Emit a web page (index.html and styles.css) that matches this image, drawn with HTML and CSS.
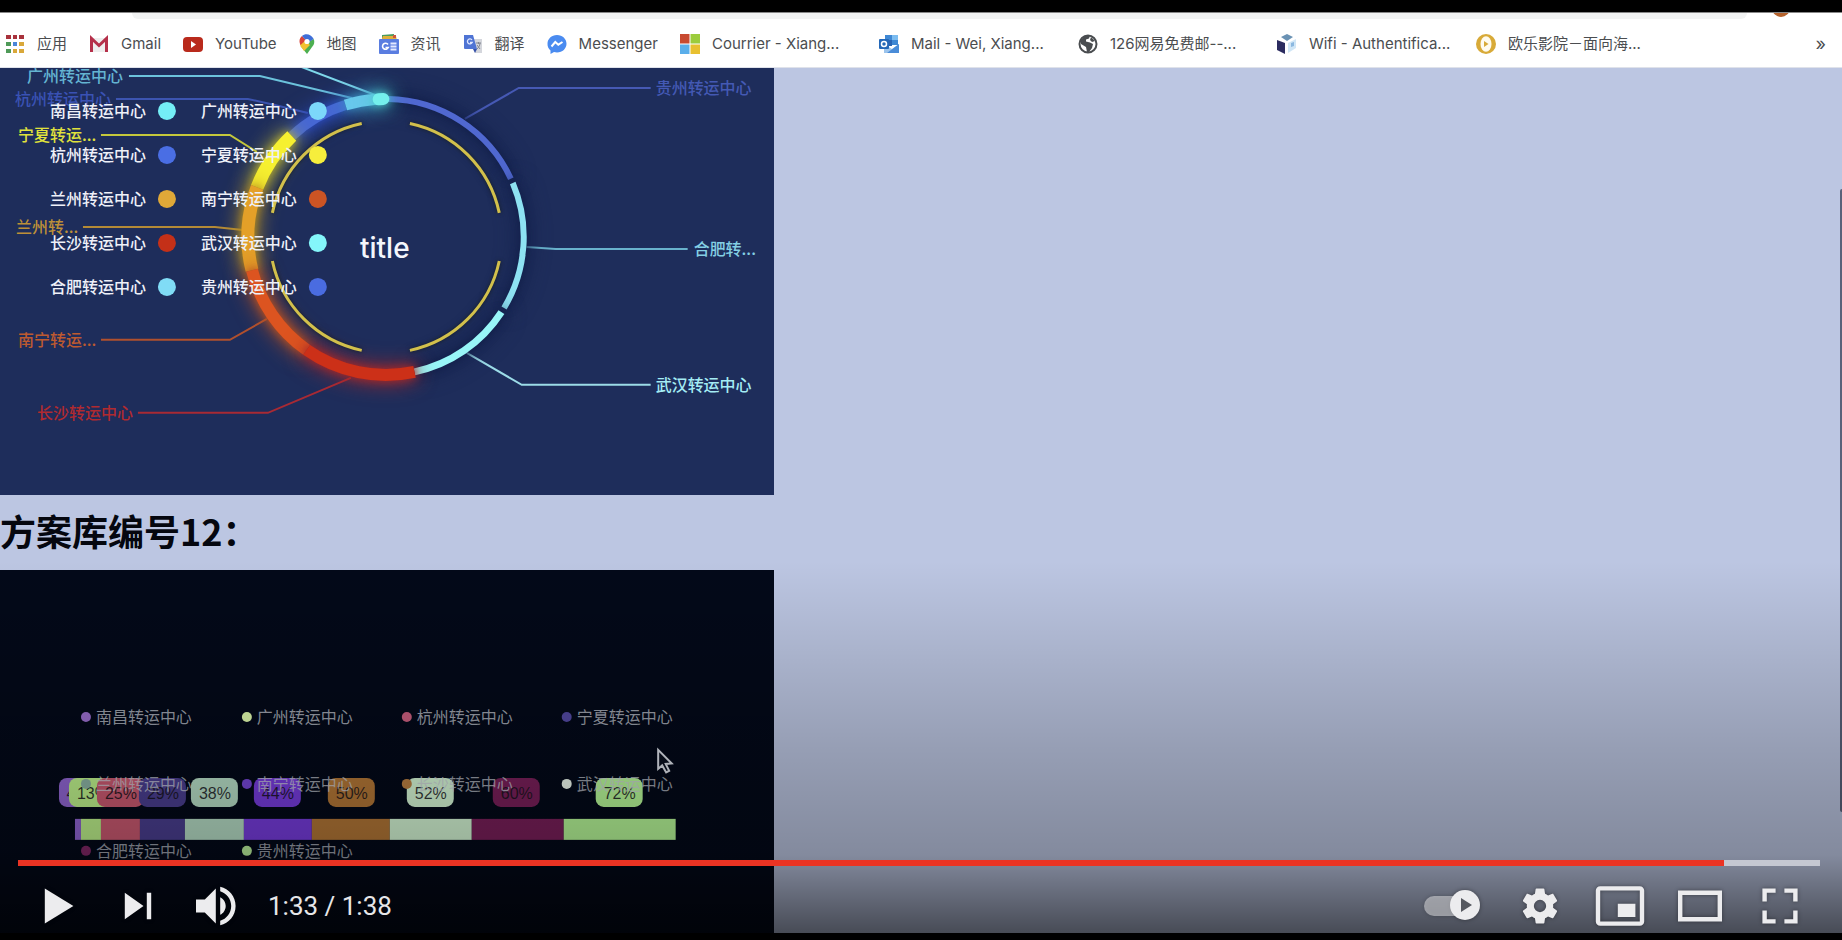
FILE: index.html
```html
<!DOCTYPE html>
<html lang="zh">
<head>
<meta charset="utf-8">
<title>方案库</title>
<link rel="stylesheet" href="styles.css">
</head>
<body>
<main class="player">
  <div class="browser">
    <div class="toolbar"><span class="address"></span><span class="avatar"></span></div>
    <nav class="bookmarks" aria-label="书签">
      <a class="bm" href="#"><svg viewBox="0 0 20 20"><g fill="#a8323c"><path d="M1 1h5v4H1zM8 1h4v4H8zM14 1h5v4h-5z"/></g><path fill="#4f9a58" d="M1 8h5v4H1zM1 15h5v4H1z"/><path fill="#4a86d8" d="M8 8h4v4H8z"/><path fill="#d9a83a" d="M14 8h5v4h-5zM8 15h4v4H8zM14 15h5v4h-5z"/></svg><span>应用</span></a>
      <a class="bm" href="#"><svg viewBox="0 0 20 20"><path fill="#eee" d="M3 4h14v14H3z"/><path d="M2.500 18V4.500L10 11.500l7.500-7V18" fill="none" stroke="#b5304a" stroke-width="3"/></svg><span>Gmail</span></a>
      <a class="bm" href="#"><svg viewBox="0 0 20 20"><rect y="3" width="20" height="15" rx="4" fill="#b92a1c"/><path d="M8 7l5 3.500L8 14z" fill="#fff"/></svg><span>YouTube</span></a>
      <a class="bm pin" href="#"><svg viewBox="0 0 16 20"><path fill="#4caf50" d="M1.500 12L8 20l6.500-9c1-2 1-4 .2-6z"/><path fill="#f2c230" d="M1 10l4-4 6 5-6 6-3.500-5z"/><path fill="#d9453a" d="M.5 7C.5 5 1.500 3 3 2l4 4-5.500 5C.8 9.500.5 8.500.5 7z"/><path fill="#3f6fd8" d="M3 2c3-3 9-2.500 11.700 3L10 8 6.500 6z"/><circle cx="8" cy="7.500" r="2.600" fill="#fff"/></svg><span>地图</span></a>
      <a class="bm" href="#"><svg viewBox="0 0 20 20"><path fill="#4a9b5c" d="M3 1l12-1v5H3z"/><path fill="#e0b03a" d="M4 2h13l1 5H2z"/><path fill="#cf5540" d="M14 1h3v3h-3z"/><rect y="5" width="20" height="15" rx="1" fill="#5a7de0"/><path d="M9 10.500a3 3 0 1 0 .3 3H6.500" fill="none" stroke="#fff" stroke-width="1.600"/><path d="M11.500 9.500h6M11.500 12.500h6M11.500 15.500h6" stroke="#e4eaff" stroke-width="1.800"/></svg><span>资讯</span></a>
      <a class="bm" href="#"><svg viewBox="0 0 20 20"><path fill="#d4d6dc" d="M8 5h11v14h-7z"/><path fill="#4f74d4" d="M1 1h9l4 14H2a1 1 0 0 1-1-1z"/><path fill="#3550a8" d="M10 15h4l-2 4z"/><path d="M9 6a2.500 2.500 0 1 0 .2 2.500H7" fill="none" stroke="#dfe7ff" stroke-width="1.300"/><path d="M13 9h5M15.500 8v2M17 9c0 3-2 5-3 6M14 11l3 4" fill="none" stroke="#838791"/></svg><span>翻译</span></a>
      <a class="bm" href="#"><svg viewBox="0 0 20 20"><path fill="#4a8bf0" d="M10 1c5.500 0 9.500 4 9.500 8.700S15.500 18.500 10 18.500c-1 0-2-.1-3-.4L3.500 20v-3.500A8.500 8.500 0 0 1 .5 9.700C.5 5 4.500 1 10 1z"/><path d="M4.500 12.500L8.300 8l3 2.700L15.500 8" fill="none" stroke="#fff" stroke-width="2"/></svg><span>Messenger</span></a>
      <a class="bm wide" href="#"><svg viewBox="0 0 20 20"><path fill="#c84a30" d="M0 0h9.500v9.500H0z"/><path fill="#9ccc3c" d="M10.500 0H20v9.500h-9.500z"/><path fill="#5aaeea" d="M0 10.500h9.500V20H0z"/><path fill="#e8c030" d="M10.500 10.500H20V20h-9.500z"/></svg><span>Courrier - Xiang...</span></a>
      <a class="bm wide" href="#"><svg viewBox="0 0 20 20"><path fill="#3f88d4" d="M6 1h13v10H6z"/><path fill="#7cbcf0" d="M13 1h6v5h-6z"/><path fill="#2a64b4" d="M6 6h7v6H6z"/><path fill="#9cc4ec" d="M5 10l8 5 7-5v9H5z"/><path fill="#4a8cd8" d="M20 10v9H8z"/><rect y="5" width="10" height="10" rx="1" fill="#2468b8"/><circle cx="5" cy="10" r="2.500" fill="none" stroke="#fff" stroke-width="1.500"/></svg><span>Mail - Wei, Xiang...</span></a>
      <a class="bm wide" href="#"><svg viewBox="0 0 20 20"><circle cx="10" cy="10" r="8.500" fill="#fff" stroke="#4a4d50" stroke-width="2"/><path fill="#4a4d50" d="M3 6l4-4 5-.5-1 3-3 1v2l4 1 3 1.500-1 4-3 4H9l-1-5-5-3zM13 3l4 4-3 1-2-2z"/></svg><span>126网易免费邮--...</span></a>
      <a class="bm wide" href="#"><svg viewBox="0 0 20 20"><path fill="#6a92b4" d="M4 3l6-3 6 3-6 4z"/><path fill="#2c2c60" d="M0 6l8 3v11l-8-4z"/><path fill="#d0e6f6" d="M11 9l8-4v9l-8 5z"/><path fill="#8bb8e0" d="M14 9l3-1v4l-3 1z"/></svg><span>Wifi - Authentifica...</span></a>
      <a class="bm wide" href="#"><svg viewBox="0 0 20 20"><circle cx="10" cy="10" r="10" fill="#d8aa38"/><ellipse cx="10" cy="10" rx="5.500" ry="7.800" fill="#fffbee"/><path fill="#d8aa38" d="M8 7l4.500 3L8 13z"/></svg><span>欧乐影院－面向海...</span></a>
      <button class="more" type="button" aria-label="更多书签">»</button>
    </nav>
  </div>

  <div class="page">
    <section class="card ring">
      <svg viewBox="0 68 774 427" role="img" aria-label="转运中心">
        <g class="leaders">
          <path stroke="#7ed8ea" d="M299 66L378 96"/>
          <path stroke="#6cc3dc" d="M129 76H260L352 98"/>
          <path stroke="#3c54b0" d="M116 99H248L275 105L308 113"/>
          <path stroke="#c4c83c" d="M101 135H230L257 152"/>
          <path stroke="#b48a36" d="M83 227H215L243 230"/>
          <path stroke="#b0502e" d="M101 340H230L267 319"/>
          <path stroke="#a82a34" d="M138 413H268L351 378"/>
          <path stroke="#4659b4" d="M465 119L519 88H651"/>
          <path stroke="#69b2cc" d="M527 247L556 249H688"/>
          <path stroke="#9cdce8" d="M467 353L522 385H651"/>
        </g>
        <g class="labels">
          <text x="27" y="82" fill="#64b4d2">广州转运中心</text>
          <text x="15" y="105" fill="#3a52b4">杭州转运中心</text>
          <text x="18" y="141" fill="#e0e23c">宁夏转运...</text>
          <text x="16" y="233" fill="#bd9038">兰州转...</text>
          <text x="18" y="346" fill="#bd5a30">南宁转运...</text>
          <text x="37" y="419" fill="#b02a30">长沙转运中心</text>
          <text x="656" y="94" fill="#4459b4">贵州转运中心</text>
          <text x="694" y="255" fill="#84cfe4">合肥转...</text>
          <text x="656" y="391" fill="#a4ecf4">武汉转运中心</text>
        </g>
        <g id="arcs" class="arcs"></g>
        <g id="inner" class="inner"></g>
        <text class="ring-title" x="385" y="258">title</text>
        <g id="ringLegend" class="ring-legend"></g>
      </svg>
    </section>
    <h1 class="heading">方案库编号12：</h1>
    <section class="card stack">
      <svg viewBox="0 571 774 427" role="img" aria-label="占比">
        <g id="bars"></g>
        <g id="tags" class="tags"></g>
        <g id="stackLegend" class="stack-legend"></g>
        <path class="cursor" d="M658.500 751v19l4-3.500 4 7 3-1.500-3.500-7 6-.5z"/>
      </svg>
    </section>
    <span class="scroll"></span>
    <div class="shade"></div>
  </div>

  <div class="controls">
    <input class="seek" type="range" min="0" max="98" value="93" aria-label="进度">
    <div class="buttons">
      <button type="button" aria-label="播放"><svg viewBox="3 3 30 30"><path d="M12 26l13-8-13-8z"/></svg></button>
      <button type="button" aria-label="下一个"><svg viewBox="3 3 30 30"><path d="M12 24l8.500-6L12 12zM22 12v12h2V12z"/></svg></button>
      <button type="button" aria-label="音量"><svg viewBox="3 3 30 30"><path d="M8 21h4l5 5V10l-5 5H8zM19 14v8c1.480-.68 2.500-2.230 2.500-4 0-1.740-1.020-3.260-2.500-4zM19 11.290c2.890.86 5 3.540 5 6.710s-2.110 5.850-5 6.710v2.060c4.010-.91 7-4.490 7-8.770s-2.990-7.860-7-8.770z"/></svg></button>
      <span class="time">1:33 / 1:38</span>
      <span class="spacer"></span>
      <button class="auto" type="button" role="switch" aria-checked="true" aria-label="自动播放"><svg viewBox="0 0 66 66"><rect x="5" y="23" width="46" height="20" rx="10" opacity=".5"/><circle cx="46" cy="32" r="15"/><path class="hole" d="M42 25v14l11-7z"/></svg></button>
      <button type="button" aria-label="设置"><svg viewBox="3 3 30 30"><path fill-rule="evenodd" d="M23.940 18.780c.03-.25.05-.51.05-.78s-.02-.52-.05-.78l1.680-1.320c.15-.12.19-.33.09-.51l-1.600-2.760c-.09-.17-.31-.24-.48-.17l-1.990.8c-.41-.32-.86-.58-1.350-.78l-.3-2.120c-.02-.19-.19-.33-.39-.33h-3.200c-.2 0-.36.14-.39.33l-.3 2.120c-.48.2-.93.47-1.350.78l-1.990-.8c-.18-.07-.39 0-.48.17l-1.600 2.760c-.1.17-.05.39.09.51l1.680 1.320c-.03.25-.05.52-.05.78s.02.52.05.78l-1.680 1.320c-.15.12-.19.33-.09.51l1.600 2.760c.09.17.31.24.48.17l1.990-.8c.41.32.86.58 1.350.78l.3 2.120c.02.19.19.33.39.33h3.200c.2 0 .36-.14.39-.33l.3-2.120c.48-.2.93-.47 1.350-.78l1.990.8c.18.07.39 0 .48-.17l1.600-2.760c.09-.17.05-.39-.09-.51zM18 20.800a2.800 2.800 0 1 1 0-5.600 2.800 2.800 0 0 1 0 5.600z"/></svg></button>
      <button type="button" aria-label="迷你播放器"><svg viewBox="3 3 30 30"><path fill-rule="evenodd" d="M25 17h-8v6h8zM29 25V11c0-1.100-.9-2-2-2H9c-1.100 0-2 .9-2 2v14c0 1.100.9 2 2 2h18c1.100 0 2-.9 2-2zM27 25H9V11h18z"/></svg></button>
      <button type="button" aria-label="剧场模式"><svg viewBox="3 3 30 30"><path fill-rule="evenodd" d="M28 11v14H8V11zM10 13h16v10H10z"/></svg></button>
      <button type="button" aria-label="全屏"><svg viewBox="3 3 30 30"><path d="M10 16h2v-4h4v-2h-6zM20 10v2h4v4h2v-6zM24 24h-4v2h6v-6h-2zM12 20h-2v6h6v-2h-4z"/></svg></button>
    </div>
  </div>
</main>
<script src="charts.js"></script>
</body>
</html>
```
FILE: styles.css
```css
* { box-sizing: border-box; }
body {
  margin: 0;
  overflow: hidden;
  background: #000;
  font-family: Inter, "Noto Sans CJK SC", sans-serif;
}
button { border: 0; padding: 0; background: none; }
.player {
  position: relative;
  display: flex;
  flex-direction: column;
  height: 100vh;
  padding: 12px 0 7px;
  overflow: hidden;
}
.browser { background: #fff; border-top: 1px solid #888; border-bottom: 1px solid #dfe2ea; }
.toolbar { display: flex; height: 7px; padding: 0 52px 0 132px; gap: 25px; overflow: hidden; }
.address { flex: 1; height: 6px; background: #f2f3f3; border-radius: 0 0 8px 8px; }
.avatar { width: 18px; height: 18px; margin-top: -14px; border-radius: 50%; background: #b5622c; }
.bookmarks { display: flex; align-items: center; gap: 22px; height: 47px; padding: 0 16px 0 5px; }
.bm {
  display: flex;
  align-items: center;
  gap: 12px;
  color: #4b4d50;
  font-size: 15px;
  line-height: 24px;
  white-space: nowrap;
  text-decoration: none;
}
.bm svg { width: 20px; height: 20px; flex: none; }
.bm.pin svg { width: 16px; }
.bm.wide { width: 177px; }
.more { margin-left: auto; color: #4b4d50; font: 18px Inter, sans-serif; }

.page { position: relative; flex: 1; min-height: 0; overflow: hidden; background: #bcc6e2; }
.card { width: 42%; }
.card svg { display: block; width: 100%; height: auto; }
.ring { background: #1e2d5b; }
.stack { background: #030919; }
.heading { margin: 0; padding: 8px 0 13px; color: #05070f; font: bold 36px/54px "Noto Sans CJK SC", sans-serif; }

.leaders path { fill: none; stroke-width: 2; }
.labels text, .ring-legend text, .stack-legend text { font: 500 16px "Noto Sans CJK SC", sans-serif; }
.ring-legend text { fill: #eef0f8; }
.arcs path, .inner path { fill: none; }
.inner path { stroke: #d2c04c; stroke-width: 3; filter: drop-shadow(0 0 2px #161c20); }
.ring-title { fill: #f4f6fc; font: 500 28px Inter, sans-serif; text-anchor: middle; }
.tags text { fill: #14121a; fill-opacity: .85; font: 16px "Liberation Sans", sans-serif; text-anchor: middle; }
.stack-legend text { fill: #d0d4de; fill-opacity: .75; font-weight: 400; }
.cursor { fill: #0a1020; stroke: #dfe3ec; stroke-width: 2; }

.scroll { position: absolute; right: 0; top: 14%; width: 2px; height: 72%; background: #59617a; border-radius: 2px 0 0 2px; }
.shade {
  position: absolute;
  inset: 57% 0 0;
  background: linear-gradient(rgba(0,0,0,0), rgba(0,0,0,.08) 20%, rgba(0,0,0,.2) 50%, rgba(0,0,0,.3) 79%, rgba(0,0,0,.62));
}

.controls { position: absolute; left: 18px; right: 22px; bottom: 0; }
.seek {
  display: block;
  width: 100%;
  height: 6px;
  margin: 0;
  appearance: none;
  background: linear-gradient(90deg, #ea3323 94.7%, #c4c7d1 94.7%);
}
.seek::-webkit-slider-thumb { appearance: none; width: 0; height: 6px; }
.buttons { display: flex; align-items: center; height: 74px; padding-top: 5px; }
.buttons button { width: 80px; height: 66px; }
.buttons .auto { width: 96px; }
.buttons svg { display: block; width: 66px; height: 66px; margin: 0 auto; fill: #ececee; filter: drop-shadow(0 0 2px rgba(0,0,0,.4)); }
.buttons .hole { fill: #55585f; }
.time { margin-left: 10px; color: #e6e6e8; font: 26px Roboto, sans-serif; }
.spacer { flex: 1; }
```
FILE: charts.js
```js
const NS = 'http://www.w3.org/2000/svg';
function add(parent, tag, attrs, text) {
  const node = document.createElementNS(NS, tag);
  for (const key in attrs) node.setAttribute(key, attrs[key]);
  if (text) node.textContent = text;
  document.getElementById(parent).appendChild(node);
  return node;
}

const centre = { x: 386, y: 237 };
function arc(radius, from, to) {
  const at = a => {
    const t = a * Math.PI / 180;
    return (centre.x + radius * Math.sin(t)).toFixed(1) + ' ' + (centre.y - radius * Math.cos(t)).toFixed(1);
  };
  return `M${at(from)}A${radius} ${radius} 0 0 1 ${at(to)}`;
}

// start angle, end angle, thickness, colour, glow
[
  [1, 65, 6, '#5068d0', '#101d48'],
  [67, 121, 6, '#8ee2f2', '#101d48'],
  [123, 168, 7, '#98f6f8', '#101d48'],
  [317, 343, 10, '#4667d4', '#2c4cc0'],
  [343, 356, 11, '#68c8ec', '#3a8cc0'],
  [291, 317, 13, '#f6f030', '#b8b030'],
  [256, 291, 13, '#e4a028', '#b89020'],
  [215, 256, 12, '#dc5420', '#b85020'],
  [168, 215, 12, '#cc3018', '#a82828'],
  [357, 359, 12, '#74f0ec', '#48c8c8']
].forEach(([from, to, width, stroke, glow]) => {
  const path = add('arcs', 'path', { d: arc(138, from, to), stroke, 'stroke-width': width });
  path.style.filter = `drop-shadow(0 0 4px ${glow}) drop-shadow(0 0 10px ${glow})`;
  if (to - from < 5) path.setAttribute('stroke-linecap', 'round');
});

[12, 102, 192, 282].forEach(start => add('inner', 'path', { d: arc(116, start, start + 66) }));

[
  ['南昌', '#74eef6'], ['广州', '#7cd8fa'],
  ['杭州', '#4a6ee4'], ['宁夏', '#f6ee3c'],
  ['兰州', '#e0a838'], ['南宁', '#cc5424'],
  ['长沙', '#c43018'], ['武汉', '#84f6fa'],
  ['合肥', '#80dcf6'], ['贵州', '#4a6ce0']
].forEach(([name, fill], i) => {
  const column = i % 2, y = 111 + 44 * Math.floor(i / 2);
  add('ringLegend', 'text', { x: 50 + 151 * column, y: y + 6 }, name + '转运中心');
  add('ringLegend', 'circle', { cx: 167 + 151 * column, cy: y, r: 9, fill });
});

// bar start, tag centre, share, colour
const parts = [
  [75, 83, '4%', '#9468d8'],
  [81, 93, '13%', '#c4fa90'],
  [101, 121, '25%', '#d05c74'],
  [140, 163, '29%', '#4c4094'],
  [185, 215, '38%', '#bce4cc'],
  [244, 278, '44%', '#7a3ee4'],
  [312, 352, '50%', '#b87a38'],
  [390, 431, '52%', '#dcffdc'],
  [472, 517, '60%', '#7c205c'],
  [564, 620, '72%', '#bcff9c']
];
parts.forEach(([x, mid, share, fill], i) => {
  const end = i < 9 ? parts[i + 1][0] : 676;
  add('bars', 'rect', { x, y: 820, width: end - x, height: 21, fill });
  add('tags', 'rect', { x: mid - 24, y: 779, width: 47, height: 29, rx: 8, fill });
  add('tags', 'text', { x: i ? mid : mid - 5, y: 800 }, share);
});

[
  ['南昌', '#9c70d0'], ['广州', '#e4ffb0'], ['杭州', '#cc6080'], ['宁夏', '#544aa4'],
  ['兰州', '#8fb8a8'], ['南宁', '#7848dc'], ['长沙', '#c08444'], ['武汉', '#f4fff4'],
  ['合肥', '#842868'], ['贵州', '#c0f8a0']
].forEach(([name, fill], i) => {
  const x = 86 + 160 * (i % 4) + (i % 4 ? 1 : 0), y = 718 + 67 * Math.floor(i / 4);
  add('stackLegend', 'circle', { cx: x, cy: y, r: 5, fill });
  add('stackLegend', 'text', { x: x + 10, y: y + 6 }, name + '转运中心');
});
```
